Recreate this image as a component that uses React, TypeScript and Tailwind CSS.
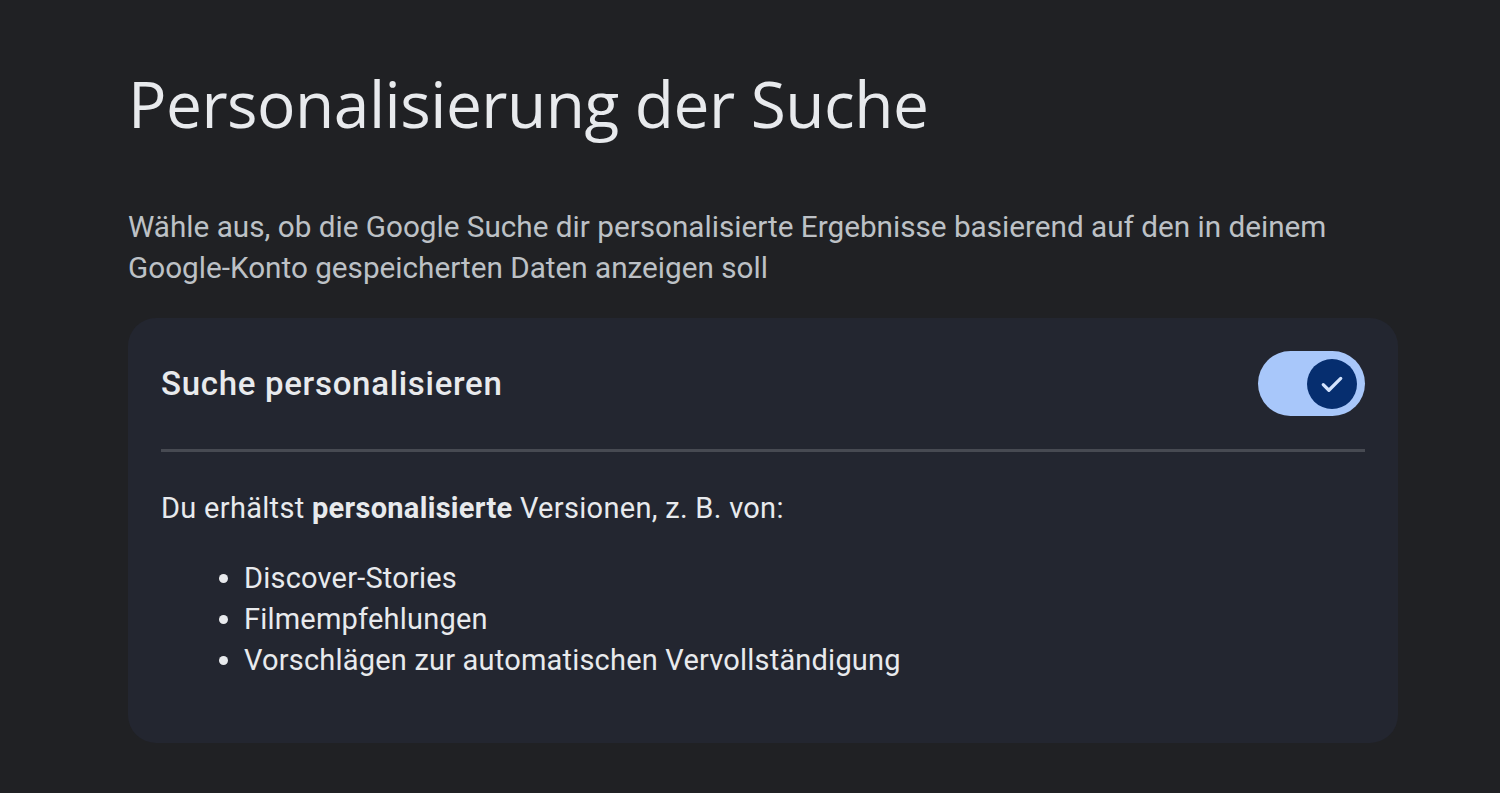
import React, { useState } from 'react';

export default function App() {
  const [on, setOn] = useState(true);

  const items = ["Discover-Stories", "Filmempfehlungen", "Vorschlägen zur automatischen Vervollständigung"];

  return (
    <div className="min-h-[793px] w-full bg-[#202124] font-['Roboto',sans-serif]">
      <div className="ml-[128px] w-[1270px] pt-[60px]">
        {/* HEADER */}
        <h1 className="font-['Open_Sans',sans-serif] text-[64px] leading-[88px] font-normal text-[#e8eaed] tracking-[-0.5px]">
          Personalisierung der Suche
        </h1>
        <p className="mt-[58px] text-[29.7px] leading-[41px] text-[#bdc1c6]">
          Wähle aus, ob die Google Suche dir personalisierte Ergebnisse basierend auf den in deinem Google-Konto gespeicherten Daten anzeigen soll
        </p>

        {/* CARD */}
        <div className="mt-[30px] rounded-[28px] bg-[#232630] px-[33px] pt-[33px] pb-[62px]">
          <div className="flex items-center justify-between">
            <h2 className="text-[33px] font-medium tracking-[0.7px] text-[#e8eaed]">Suche personalisieren</h2>
            <button
              onClick={() => setOn(!on)}
              className={`flex h-[65px] w-[107px] items-center rounded-full px-[8px] ${on ? 'justify-end bg-[#a8c7fa]' : 'justify-start bg-[#5f6368]'}`}
            >
              <span className="flex h-[50px] w-[50px] items-center justify-center rounded-full bg-[#062e6f]">
                {on && (
                  <svg width="30" height="30" viewBox="0 0 24 24" fill="none" stroke="#d3e3fd" strokeWidth="2.6" strokeLinecap="round" strokeLinejoin="round">
                    <path d="M5 12.5l4.5 4.5L19 7.5" />
                  </svg>
                )}
              </span>
            </button>
          </div>

          <div className="mt-[33px] h-[3px] bg-[#474a52]" />

          <p className="mt-[36px] text-[29px] leading-[41px] tracking-[0.3px] text-[#e8eaed]">
            Du erhältst <strong className="font-bold">personalisierte</strong> Versionen, z. B. von:
          </p>
          <ul className="mt-[29px] list-disc pl-[83px] text-[29px] leading-[41px] tracking-[0.2px] text-[#e8eaed]">
            {items.map((item) => (
              <li key={item}>{item}</li>
            ))}
          </ul>
        </div>
      </div>
    </div>
  );
}
